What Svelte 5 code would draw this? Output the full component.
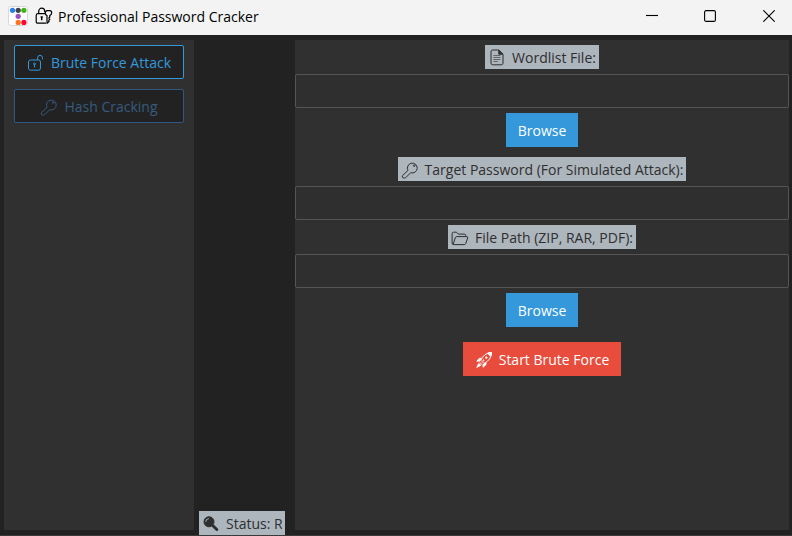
<script>
  let wordlist = $state('');
  let target = $state('');
  let filePath = $state('');
</script>

{#snippet key()}
  <svg class="icon" viewBox="0 0 18 18" aria-hidden="true">
    <path d="M7 9.400a4.900 4.900 0 1 1 2.700 2.300l-4.900 4.900q-1 .8-2.700.3-1.400-.8-.6-2.300z" />
    <circle cx="13.200" cy="4.600" r=".8" />
  </svg>
{/snippet}

<div class="window">
  <header class="titlebar">
    <svg class="logo" viewBox="0 0 20 20" aria-hidden="true">
      <rect x=".5" y=".5" width="19" height="19" rx="2" fill="#fff" stroke="#d8d8d8" />
      <circle cx="4.500" cy="4.300" r="2.600" fill="#2d7fe8" />
      <circle cx="10.200" cy="4.300" r="2.600" fill="#40434a" />
      <circle cx="15.900" cy="4.300" r="2.600" fill="#3fb618" />
      <circle cx="10.200" cy="10.300" r="2.600" fill="#9954bb" />
      <circle cx="10.200" cy="16.400" r="2.600" fill="#ff7518" />
      <circle cx="15.900" cy="16.400" r="2.600" fill="#ff0039" />
    </svg>
    <svg class="lock-key" viewBox="0 0 18 18" aria-hidden="true">
      <path d="M11.500 16.200H3q-1.800 0-1.800-1.800V8.500q0-1.800 1.800-1.800h7.500M3.700 6.500V4.200a3 3 0 0 1 6 0v1" />
      <path d="M10.300 6q0-2.300 2-2.300h2.400q2 0 2 2.100 0 1.900-1.900 2.700v1.500l-.9 1 .9 1.200-1.100 1.100.4 1.100-1.600 1.500-.5-1V8.600q-1.700-.8-1.700-2.600z" />
      <path class="hole" d="M6.700 9.300v4M5.600 10h2.200" />
    </svg>
    <h1>Professional Password Cracker</h1>
    <div class="controls">
      <button aria-label="Minimize"><svg viewBox="0 0 12 12"><path d="M0 5.5h12" /></svg></button>
      <button aria-label="Maximize"><svg viewBox="0 0 12 12"><rect x=".6" y=".6" width="10.8" height="10.8" rx="1.5" /></svg></button>
      <button aria-label="Close"><svg viewBox="0 0 12 12"><path d="M.3.3l11.400 11.400M11.700.3L.3 11.700" /></svg></button>
    </div>
  </header>

  <div class="body">
    <nav class="panel side">
      <button class="tab">
        <svg class="icon" viewBox="0 0 18 18" aria-hidden="true">
          <rect x="1.500" y="6" width="12" height="10.200" rx="2" />
          <path d="M10.600 6V3.800a2.400 2.400 0 0 1 4.900 0v1.500" />
          <circle cx="7.500" cy="9.800" r=".9" />
          <path d="M7.500 10.300v3" />
        </svg>
        Brute Force Attack
      </button>
      <button class="tab muted">
        {@render key()}
        Hash Cracking
      </button>
    </nav>

    <div class="status-column">
      <div class="status" role="status">
        <svg class="icon" viewBox="0 0 18 18" aria-hidden="true">
          <circle cx="7" cy="6.800" r="5" fill="currentColor" />
          <path class="glint" d="M3.800 6.800a3.200 3.200 0 0 1 3-3.200" />
          <path class="handle" d="M11.200 11l3.600 3.500" />
        </svg>
        <span>Status: Ready</span>
      </div>
    </div>

    <main class="panel form">
      <label class="tag" for="wordlist">
        <svg class="icon" viewBox="0 0 18 18" aria-hidden="true">
          <path d="M10.800 1H4.600Q3 1 3 2.600v11.600q0 1.600 1.600 1.600h8.800q1.600 0 1.600-1.600V5.200z" />
          <path d="M10.800 1.200v4h4z" fill="currentColor" />
          <path class="thin" d="M5.400 6.500h7M5.400 8.500h7M5.400 10.500h7M5.400 12.500h4.400" />
        </svg>
        Wordlist File:
      </label>
      <input id="wordlist" type="text" bind:value={wordlist} />
      <button class="action browse">Browse</button>

      <label class="tag" for="target">
        {@render key()}
        Target Password (For Simulated Attack):
      </label>
      <input id="target" type="text" bind:value={target} />

      <label class="tag" for="path">
        <svg class="icon" viewBox="0 0 18 18" aria-hidden="true">
          <path d="M2 15.500q-.9-.2-.9-1.500V4.700q0-1.500 1.500-1.500h2.800l1.900 1.900h6q1.500 0 1.500 1.500v.9" />
          <path d="M2.100 15.600l2.200-6.900q.4-1.100 1.500-1.100h10q1.300 0 .9 1.200l-1.900 5.600q-.4 1.200-1.600 1.200z" />
        </svg>
        File Path (ZIP, RAR, PDF):
      </label>
      <input id="path" type="text" bind:value={filePath} />
      <button class="action">Browse</button>

      <button class="action start">
        <svg class="icon" viewBox="0 0 18 18" aria-hidden="true">
          <path d="M5.800 9.300Q8.500 2.300 16.400 1.500 16.500 8.800 9 12.500z" />
          <path d="M12.500 2.200l3.100 3.100q.9-1.900.8-3.800-2.100 0-3.900.7z" fill="currentColor" />
          <circle cx="11.300" cy="6.600" r=".8" fill="currentColor" />
          <circle cx="8.600" cy="9.300" r=".5" fill="currentColor" />
          <path d="M6.500 7.300H4.400L1.800 10.200l3.300-.2M11 11.500v2l-3 2.700.2-3.300" fill="currentColor" />
          <path d="M4.600 11.300l2.400 2.300M3.800 12.400l-2 4 3.900-2.100z" fill="currentColor" />
        </svg>
        Start Brute Force
      </button>
    </main>
  </div>
</div>

<style>
  :global(body) {
    margin: 0;
    background: #222;
  }

  .window,
  button,
  input {
    font-family: 'Segoe UI', 'Open Sans', 'Noto Sans', sans-serif;
    font-size: 14px;
    line-height: 20px;
  }

  .window {
    display: flex;
    flex-direction: column;
    box-sizing: border-box;
    min-height: 100vh;
    background: #222;
    border-bottom: 1px solid #3a3a3a;
  }

  svg {
    display: block;
    flex: none;
    fill: none;
    stroke: currentColor;
  }

  .icon {
    width: 18px;
    height: 18px;
    stroke-width: 1;
    stroke-linejoin: round;
  }

  .thin {
    stroke-width: 0.6;
  }

  .hole {
    stroke-width: 1.5;
  }

  .glint {
    stroke: #adb5bd;
  }

  .handle {
    stroke-width: 3;
    stroke-linecap: round;
  }

  .titlebar {
    display: flex;
    align-items: center;
    height: 35px;
    padding-left: 8px;
    background: #f3f3f3;
    color: #000;
  }

  .logo {
    width: 20px;
    height: 20px;
    margin: 0 7px 3px 0;
    stroke: none;
  }

  .lock-key {
    width: 18px;
    height: 18px;
    margin: 0 5px 3px 0;
    stroke-width: 1.2;
  }

  h1 {
    flex: 1;
    margin: 0 0 1px;
    font-size: 14px;
    font-weight: 400;
    white-space: nowrap;
  }

  .controls {
    display: flex;
    height: 32px;
    margin-bottom: 3px;
  }

  .controls button {
    display: flex;
    align-items: center;
    justify-content: center;
    width: 58px;
    padding: 0;
    border: 0;
    background: none;
    color: #000;
  }

  .controls button:last-child {
    width: 46px;
    margin-left: 7px;
  }

  .controls svg {
    width: 12px;
    height: 12px;
    stroke-width: 1.1;
  }

  .body {
    display: flex;
    flex: 1;
    padding: 5px 3px 0 4px;
  }

  .panel {
    display: flex;
    flex-direction: column;
    box-sizing: border-box;
    margin-bottom: 5px;
    background: #303030;
  }

  .side {
    flex: none;
    gap: 10px;
    width: 190px;
    padding: 5px 10px;
  }

  .tab {
    display: flex;
    align-items: center;
    justify-content: center;
    gap: 6px;
    height: 34px;
    padding: 2px 0 0;
    border: 1px solid #3498db;
    border-radius: 2px;
    background: #222;
    color: #3498db;
  }

  .muted {
    border-color: #30587f;
    color: #375a7f;
  }

  .status-column {
    display: flex;
    flex: none;
    align-items: flex-end;
    width: 86px;
    margin: 0 10px 0 5px;
  }

  .status,
  .tag {
    display: flex;
    align-items: center;
    gap: 6px;
    box-sizing: border-box;
    height: 24px;
    padding: 2px 3px 0;
    background: #adb5bd;
    color: #2f2f2f;
    white-space: nowrap;
  }

  .status {
    width: 100%;
  }

  .status span {
    overflow: hidden;
  }

  .form {
    flex: 1;
    align-items: center;
    gap: 5px;
    padding-top: 5px;
  }

  input {
    box-sizing: border-box;
    width: 100%;
    height: 34px;
    padding: 0 8px;
    border: 1px solid #555;
    border-radius: 2px;
    background: #2f2f2f;
    color: #fff;
  }

  .action {
    display: flex;
    align-items: center;
    gap: 6px;
    height: 34px;
    padding: 2px 12px 0;
    border: 0;
    background: #3498db;
    color: #fff;
  }

  .browse {
    margin-bottom: 5px;
  }

  .start {
    margin-top: 10px;
    background: #e74c3c;
  }
</style>
